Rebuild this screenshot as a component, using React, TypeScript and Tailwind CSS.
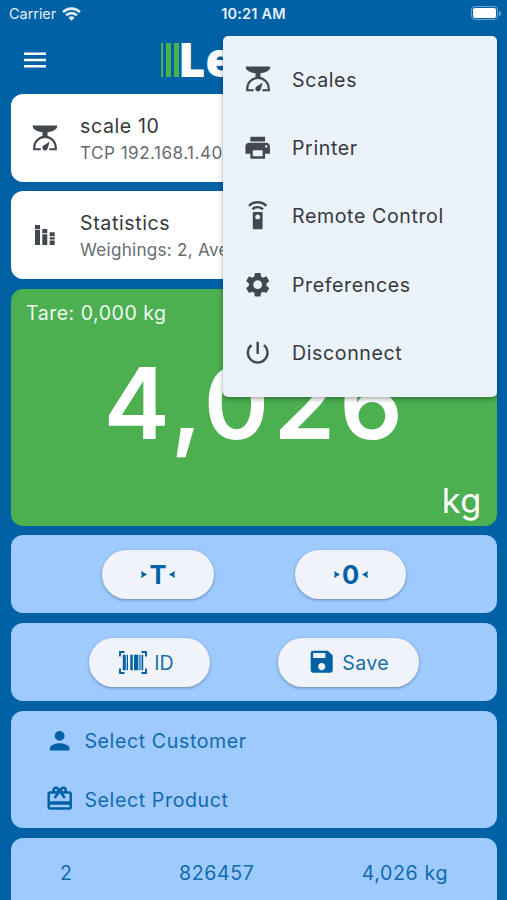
import type { ReactNode } from "react";
import { MdCardGiftcard, MdPerson, MdPowerSettingsNew, MdPrint, MdSave, MdSettings, MdSettingsRemote } from "react-icons/md";

function ScaleIcon() {
  return (
    <svg width="26" height="26" viewBox="0 0 26 26" fill="none">
      <path d="M.8.5h24.400v1.200c-.4 2.800-4.400 4.600-9.700 5.600v4.500h-5V7.300C5.200 6.300 1.200 4.500.8 1.700z" fill="currentColor" />
      <path d="M8.700 24.200H2.200v-1.500a10.800 10.800 0 0 1 21.600 0v1.500h-6.500" stroke="currentColor" strokeWidth="2.100" />
      <path d="M17.800 16.400l-2.100 6.800a2.700 2.700 0 1 1-4.100-2.700z" fill="currentColor" />
    </svg>
  );
}

function StatisticsIcon() {
  return (
    <svg width="20" height="20" viewBox="0 0 20 20" fill="currentColor">
      <path d="M0 0h5v4.200H0zM0 5h5v15H0zM7.300 4h5v4.200h-5zM7.300 9.200h5V20h-5zM14.700 7.300h5v4h-5zM14.700 12.200h5v2.300h-5zM14.700 15.400h5V20h-5z" />
    </svg>
  );
}

function BarcodeIcon() {
  return (
    <svg width="28" height="23" viewBox="0 0 28 23" fill="currentColor">
      <path d="M1 5.500V1h4.500M22.500 1H27v4.500M27 17.500V22h-4.500M5.500 22H1v-4.500" fill="none" stroke="currentColor" strokeWidth="1.900" />
      <path d="M3.800 3.800h3v15.400h-3zM7.700 3.800h1.300v15.400H7.700zM11.300 3.800h2.500v15.400h-2.500zM15 3.800h4.300v15.400H15zM20.300 3.800h1.200v15.400h-1.200zM22.500 3.800h1.700v15.400h-1.700z" />
    </svg>
  );
}

function WifiIcon() {
  return (
    <svg width="19" height="14" viewBox="0 0 19 14" fill="none" stroke="currentColor" strokeWidth="2.600">
      <path d="M1 5.100a12.200 12.200 0 0 1 17 0M4.100 8.400a7.600 7.600 0 0 1 10.800 0" />
      <path d="M9.500 13.800L6.500 10.700a4.300 4.300 0 0 1 6 0z" fill="currentColor" stroke="none" />
    </svg>
  );
}

function InfoCard({ icon, title, detail, className }: { icon: ReactNode; title: string; detail: string; className: string }) {
  return (
    <section className={`flex h-[88px] items-center rounded-[12px] bg-white text-[#43474e] ${className}`}>
      <div className="flex w-[68px] justify-center">{icon}</div>
      <div className="ml-px pt-[2px] whitespace-nowrap">
        <h2 className="text-[19.600px] leading-[27px] tracking-[0.600px] text-[#36383b]">{title}</h2>
        <p className="text-[17.100px] leading-[25px] text-[#686b70]">{detail}</p>
      </div>
    </section>
  );
}

function Pill({ children, className }: { children: ReactNode; className: string }) {
  return (
    <button className={`flex h-[49px] items-center justify-center rounded-full bg-[#f0f4fa] shadow-[0_1px_3px_rgba(0,0,0,0.35)] ${className}`}>
      {children}
    </button>
  );
}

function ArrowedGlyph({ glyph }: { glyph: string }) {
  return (
    <span className="flex items-center gap-px">
      <svg width="6" height="7" viewBox="0 0 6 7" fill="currentColor"><path d="M0 0l6 3.500L0 7l.7-3.500z" /></svg>
      <span className="w-[20px] pt-px text-center text-[25.500px] leading-none font-bold">{glyph}</span>
      <svg width="6" height="7" viewBox="0 0 6 7" fill="currentColor"><path d="M6 0L0 3.500 6 7 5.300 3.500z" /></svg>
    </span>
  );
}

const menu = [
  { label: "Scales", icon: <ScaleIcon /> },
  { label: "Printer", icon: <MdPrint size={29.400} /> },
  { label: "Remote Control", icon: <MdSettingsRemote size={29.400} /> },
  { label: "Preferences", icon: <MdSettings size={29.400} /> },
  { label: "Disconnect", icon: <MdPowerSettingsNew size={29.400} /> },
];

export default function App() {
  return (
    <main className="relative h-[900px] w-[507px] overflow-hidden bg-[#0061a4] pr-[10px] pl-[11px] font-['Inter',sans-serif] text-[#0061a4]">
      <div className="-mr-[10px] -ml-[11px] grid h-[28px] grid-cols-3 items-center pr-[6px] pl-[9px] text-[14.500px] text-[#e3eefa]">
        <div className="flex items-center gap-[6px]"><span className="-tracking-[0.050px]">Carrier</span><WifiIcon /></div>
        <div className="-ml-[3px] text-center text-[14.500px] font-semibold tracking-[0.200px] whitespace-nowrap">10:21 AM</div>
        <div className="-mt-[2px] flex items-center justify-end gap-px">
          <div className="h-[14px] w-[27px] rounded-[4px] border border-[#6fa3cf] p-px"><div className="h-full rounded-[2px] bg-white" /></div>
          <div className="h-[5px] w-[2px] rounded-r-full bg-[#6fa3cf]" />
        </div>
      </div>
      <header className="flex h-[66px] items-center pb-[3px] pl-[13px] text-white">
        <svg width="22" height="16" viewBox="0 0 22 16" fill="currentColor">
          <path d="M0 .5h22v2.400H0zM0 6.800h22v2.400H0zM0 13.100h22v2.400H0z" />
        </svg>
        <div className="ml-[115px] flex h-[34px] items-center">
          <div className="h-[34px] w-[2px] bg-[#4caf50]" />
          <div className="ml-[3px] h-[34px] w-[5px] bg-[#4caf50]" />
          <div className="ml-[3px] h-[34px] w-[5px] bg-[#4caf50]" />
          <span className="-ml-[1px] -mt-[2px] font-['Open_Sans'] text-[47px] leading-[34px] font-extrabold">Le</span>
        </div>
      </header>
      <InfoCard className="tracking-[0.480px]" icon={<ScaleIcon />} title="scale 10" detail="TCP 192.168.1.40" />
      <InfoCard className="mt-[9px] tracking-[0.270px]" icon={<StatisticsIcon />} title="Statistics" detail="Weighings: 2, Ave" />
      <section className="mt-[10px] flex h-[237px] flex-col rounded-[12px] bg-[#4caf50] px-[15px] text-white">
        <p className="mt-[10px] text-[19.600px] leading-[28px] tracking-[0.480px] text-[#f0f9f0]">Tare: 0,000 kg</p>
        <p className="mt-[26px] -mr-[3px] text-center text-[99px] leading-[100px] font-semibold tracking-[4.400px]">4,026</p>
        <p className="mt-[29px] text-right text-[34.300px] leading-[38px] tracking-[0.600px]">kg</p>
      </section>
      <section className="mt-[9px] grid h-[78px] grid-cols-2 items-center rounded-[12px] bg-[#9ecaff] px-[50px]">
        <Pill className="ml-[41px] w-[112px]"><ArrowedGlyph glyph="T" /></Pill>
        <Pill className="ml-[41px] w-[111px]"><ArrowedGlyph glyph="0" /></Pill>
      </section>
      <section className="mt-[10px] flex h-[78px] items-center rounded-[12px] bg-[#9ecaff] pl-[78px] text-[19.600px] tracking-[0.100px]">
        <Pill className="w-[121px] gap-[7px] pr-[6px]"><BarcodeIcon /><span className="pt-[3px] text-[#166dab]">ID</span></Pill>
        <Pill className="ml-[68px] w-[141px] gap-[6px] pr-px tracking-[0.400px]"><MdSave size={29.400} /><span className="pt-[3px] text-[#166dab]">Save</span></Pill>
      </section>
      <section className="mt-[10px] flex h-[117px] flex-col rounded-[12px] bg-[#9ecaff] pl-[34px] text-[19.600px] tracking-[0.600px]">
        <div className="flex h-[59px] items-center gap-[10px]"><MdPerson size={29.400} /><span className="pt-[2px] text-[#126bac]">Select Customer</span></div>
        <div className="flex h-[58px] items-center gap-[10px]"><MdCardGiftcard size={29.400} /><span className="pt-[3px] text-[#126bac]">Select Product</span></div>
      </section>
      <section className="mt-[10px] flex h-[98px] rounded-[12px] bg-[#9ecaff] px-[49px] pt-[21px] text-[19.600px] leading-[29px] tracking-[0.600px] text-[#126bac]">
        <span className="w-[119px]">2</span><span className="w-[183px]">826457</span><span className="whitespace-nowrap">4,026 kg</span>
      </section>
      <nav className="absolute top-[36px] left-[223px] h-[361px] w-[274px] rounded-[5px] bg-[#ecf2f9] py-[9px] shadow-[0_2px_5px_rgba(0,0,0,0.35)]">
        {menu.map(({ label, icon }) => (
          <div key={label} className="flex h-[68.400px] items-center text-[19.600px] tracking-[0.600px] text-[#35393e]">
            <span className="flex w-[69px] justify-center text-[#43474e]">{icon}</span>
            <span className="pt-[2px]">{label}</span>
          </div>
        ))}
      </nav>
    </main>
  );
}
